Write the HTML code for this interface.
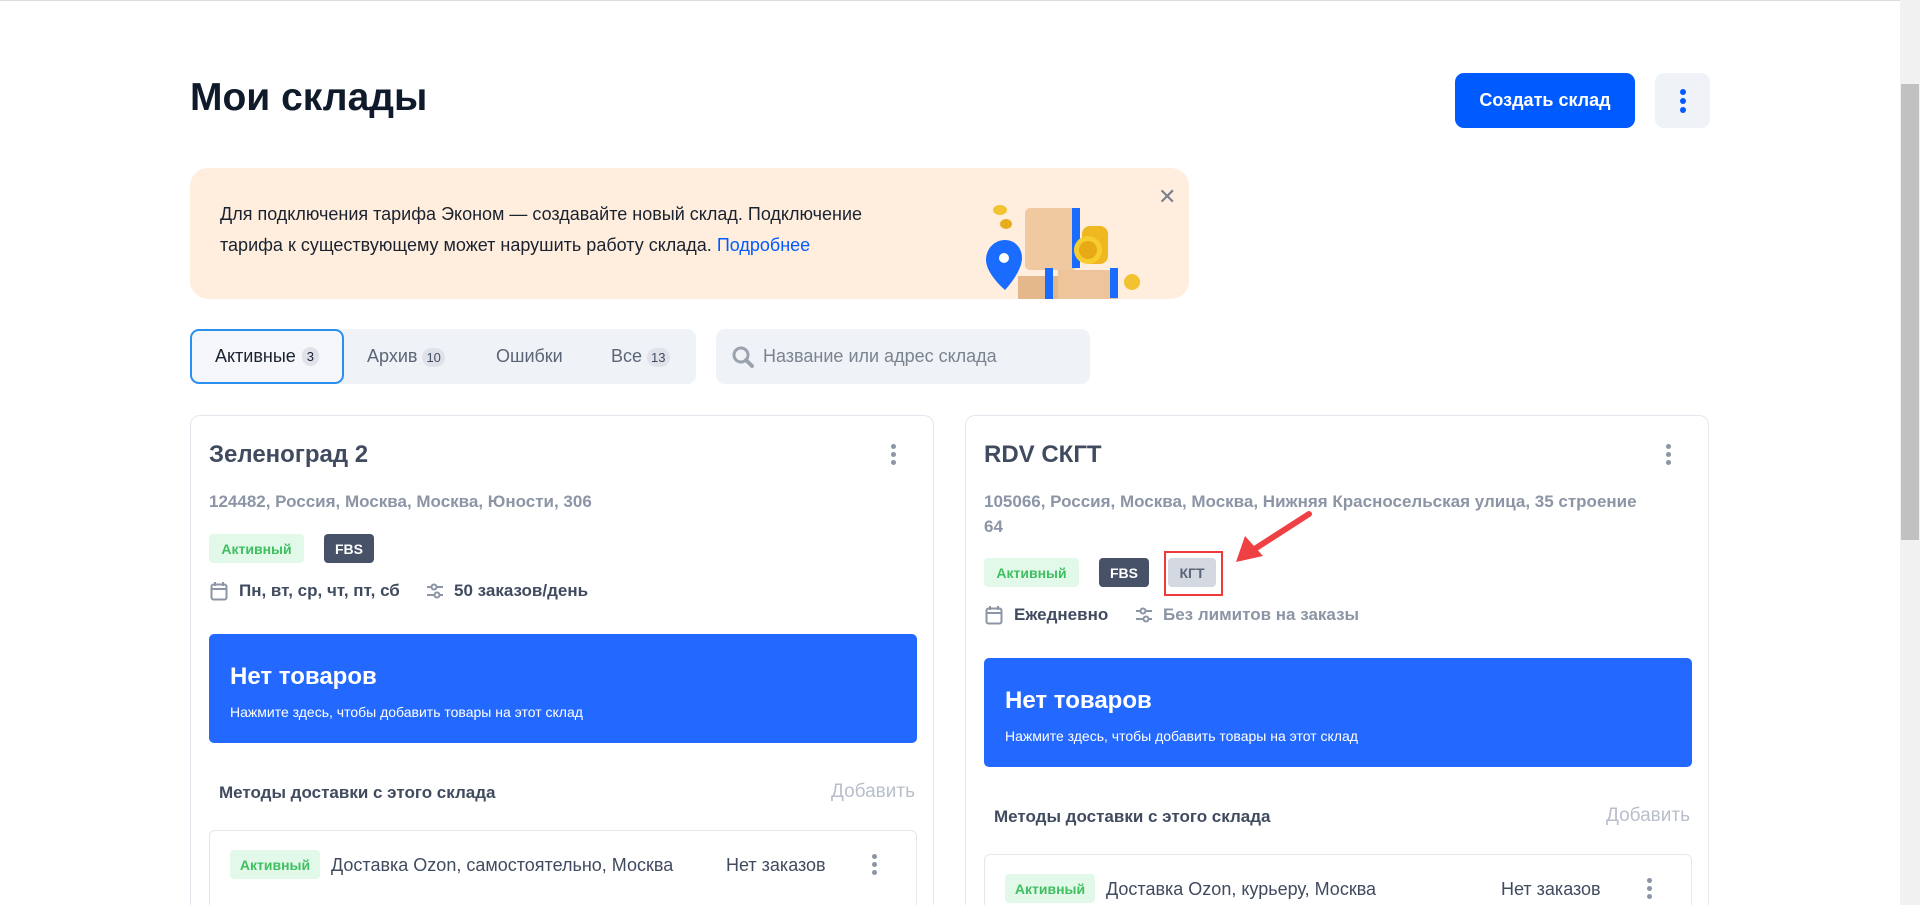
<!DOCTYPE html>
<html><head><meta charset="utf-8"><style>
*{box-sizing:border-box;margin:0;padding:0}
html{width:1920px;height:905px;overflow:hidden}
body{width:1920px;height:905px;overflow:hidden;background:#fff;font-family:"Liberation Sans",sans-serif;position:relative;color:#404b5f}
.a{position:absolute;white-space:nowrap}
.c{display:flex;align-items:center;justify-content:center}
.card{position:absolute;top:415px;width:744px;height:490px;border:1px solid #e3e7ee;border-bottom:none;border-radius:10px 10px 0 0;overflow:hidden}
.wrap{position:absolute;left:0;top:0;width:1920px;height:905px;overflow:hidden}
.t{font-size:24px;font-weight:bold;color:#404b5f}
.addr{font-size:17px;color:#8c95a5;font-weight:bold;line-height:25px}
.badge{position:absolute;height:29px;border-radius:4px;font-size:14px;font-weight:bold;display:flex;align-items:center;justify-content:center}
.act{background:#e2f9e9;color:#3fbf61}
.fbs{background:#475268;color:#fff}
.kgt{background:#d4d9e1;color:#5c6577}
.sch{font-size:17px;font-weight:bold}
.blue{position:absolute;left:18px;width:708px;height:109px;background:#2469ff;border-radius:5px;color:#fff}
.blue b{position:absolute;left:21px;top:29px;font-size:24px}
.blue span{position:absolute;left:21px;top:70px;font-size:14px}
.meth{font-size:17px;font-weight:bold}
.add{font-size:19px;color:#b8bfca}
.dl{position:absolute;left:18px;width:708px;height:120px;border:1px solid #e3e7ee;border-radius:6px}
.dots{position:absolute;width:6px}
.dots i{display:block;width:5px;height:5px;border-radius:50%;background:#8c95a5;margin-bottom:3px}
</style></head><body><div class="wrap">
<div class="a" style="left:0;top:0;width:1900px;height:1px;background:#ddd"></div>
<div class="a" style="left:1900px;top:0;width:20px;height:905px;background:#f1f1f1"></div>
<div class="a" style="left:1901px;top:84px;width:18px;height:456px;background:#c1c1c1"></div>

<div class="a" style="left:190px;top:76px;font-size:39px;font-weight:bold;color:#0f1a2a">Мои склады</div>
<div class="a c" style="left:1455px;top:73px;width:180px;height:55px;background:#005bff;border-radius:9px;color:#fff;font-size:18px;font-weight:bold">Создать склад</div>
<div class="a c" style="left:1655px;top:73px;width:55px;height:55px;background:#eff3f8;border-radius:9px;flex-direction:column;gap:3px">
<i style="width:6px;height:6px;border-radius:50%;background:#005bff"></i><i style="width:6px;height:6px;border-radius:50%;background:#005bff"></i><i style="width:6px;height:6px;border-radius:50%;background:#005bff"></i></div>

<div class="a" style="left:190px;top:168px;width:999px;height:131px;background:#ffeedd;border-radius:18px;overflow:hidden">
<div class="a" style="left:30px;top:31px;font-size:18px;line-height:31px;color:#1a2230;white-space:normal;width:700px">Для подключения тарифа Эконом — создавайте новый склад. Подключение<br>тарифа к существующему может нарушить работу склада. <span style="color:#005bff">Подробнее</span></div>
<div class="a" style="left:968px;top:16px;font-size:22px;color:#7a818c">✕</div>
<svg class="a" style="left:770px;top:30px" width="200" height="101" viewBox="0 0 200 101">
<ellipse cx="40" cy="12" rx="7" ry="5" fill="#f2c230"/><ellipse cx="46" cy="26" rx="6" ry="5" fill="#e6ad1c"/>
<path d="M26 62c0-12 9-20 19-20s17 8 17 18c0 14-17 32-17 32S26 76 26 62z" fill="#1a6cff"/><circle cx="44" cy="60" r="5" fill="#fff"/>
<rect x="58" y="78" width="50" height="30" fill="#e5b88c"/><rect x="98" y="72" width="60" height="35" fill="#eec49a"/>
<rect x="65" y="10" width="52" height="62" rx="5" fill="#f0c9a0"/><rect x="112" y="10" width="8" height="60" fill="#1a6cff"/>
<rect x="85" y="70" width="8" height="35" fill="#1a6cff"/><rect x="150" y="70" width="8" height="30" fill="#1a6cff"/>
<rect x="122" y="28" width="26" height="38" rx="8" fill="#f0b820"/><circle cx="128" cy="52" r="14" fill="#f7cc2e"/><circle cx="128" cy="52" r="9" fill="#e7a915"/>
<circle cx="172" cy="84" r="8" fill="#f2c230"/>
</svg></div>

<div class="a" style="left:190px;top:329px;width:506px;height:55px;background:#eff2f7;border-radius:9px"></div>
<div class="a c" style="left:190px;top:329px;width:154px;height:55px;background:#f5f7fa;border:2px solid #2a8ff0;border-radius:9px;font-size:18px;color:#1a2230">Активные <span style="margin-left:6px;background:#dfe3e9;border-radius:10px;font-size:13px;padding:2px 5px">3</span></div>
<div class="a" style="left:367px;top:346px;font-size:18px;color:#5c6577">Архив <span style="background:#dfe3e9;border-radius:10px;font-size:13px;padding:2px 4px;color:#404b5f">10</span></div>
<div class="a" style="left:496px;top:346px;font-size:18px;color:#5c6577">Ошибки</div>
<div class="a" style="left:611px;top:346px;font-size:18px;color:#5c6577">Все <span style="background:#dfe3e9;border-radius:10px;font-size:13px;padding:2px 4px;color:#404b5f">13</span></div>
<div class="a" style="left:716px;top:329px;width:374px;height:55px;background:#eff2f7;border-radius:9px"></div>
<svg class="a" style="left:730px;top:344px" width="26" height="26" viewBox="0 0 26 26"><circle cx="11" cy="11" r="7" fill="none" stroke="#9aa2ae" stroke-width="3"/><path d="M16 16l6 6" stroke="#9aa2ae" stroke-width="4" stroke-linecap="round"/></svg>
<div class="a" style="left:763px;top:346px;font-size:18px;color:#7a838f">Название или адрес склада</div>

<!-- card 1 -->
<div class="card" style="left:190px">
<div class="a t" style="left:18px;top:25px">Зеленоград 2</div>
<div class="dots" style="left:700px;top:28px"><i></i><i></i><i></i></div>
<div class="a addr" style="left:18px;top:73px">124482, Россия, Москва, Москва, Юности, 306</div>
<div class="badge act" style="left:18px;top:118px;width:95px">Активный</div>
<div class="badge fbs" style="left:133px;top:118px;width:50px">FBS</div>
<svg class="a" style="left:19px;top:165px" width="18" height="20" viewBox="0 0 18 20"><rect x="1.5" y="3.5" width="15" height="15" rx="2" fill="none" stroke="#8c95a5" stroke-width="2"/><path d="M1.5 8h15M5 1v4M13 1v4" stroke="#8c95a5" stroke-width="2"/></svg>
<div class="a sch" style="left:48px;top:165px">Пн, вт, ср, чт, пт, сб</div>
<svg class="a" style="left:234px;top:165px" width="20" height="20" viewBox="0 0 20 20"><path d="M2 6h5M11 6h7M2 14h8M14 14h4" stroke="#8c95a5" stroke-width="2"/><circle cx="9" cy="6" r="2.5" fill="none" stroke="#8c95a5" stroke-width="2"/><circle cx="12" cy="14" r="2.5" fill="none" stroke="#8c95a5" stroke-width="2"/></svg>
<div class="a sch" style="left:263px;top:165px">50 заказов/день</div>
<div class="blue" style="top:218px"><b>Нет товаров</b><span>Нажмите здесь, чтобы добавить товары на этот склад</span></div>
<div class="a meth" style="left:28px;top:367px">Методы доставки с этого склада</div>
<div class="a add" style="right:18px;top:365px">Добавить</div>
<div class="dl" style="top:414px">
<div class="badge act" style="left:20px;top:19px;width:90px">Активный</div>
<div class="a" style="left:121px;top:24px;font-size:18px">Доставка Ozon, самостоятельно, Москва</div>
<div class="a" style="left:516px;top:24px;font-size:18px">Нет заказов</div>
<div class="dots" style="left:662px;top:23px"><i></i><i></i><i></i></div>
</div></div>

<!-- card 2 -->
<div class="card" style="left:965px">
<div class="a t" style="left:18px;top:25px">RDV СКГТ</div>
<div class="dots" style="left:700px;top:28px"><i></i><i></i><i></i></div>
<div class="a addr" style="left:18px;top:73px">105066, Россия, Москва, Москва, Нижняя Красносельская улица, 35 строение<br>64</div>
<div class="badge act" style="left:18px;top:142px;width:95px">Активный</div>
<div class="badge fbs" style="left:133px;top:142px;width:50px">FBS</div>
<div class="badge kgt" style="left:202px;top:142px;width:48px">КГТ</div>
<div class="a" style="left:198px;top:135px;width:59px;height:45px;border:2px solid #ee3a3a"></div>
<svg class="a" style="left:265px;top:90px" width="90" height="60" viewBox="0 0 90 60"><path d="M78 8L22 44" stroke="#ef4044" stroke-width="6" stroke-linecap="round"/><path d="M5 56L14 30L32 50Z" fill="#ef4044"/></svg>
<svg class="a" style="left:19px;top:189px" width="18" height="20" viewBox="0 0 18 20"><rect x="1.5" y="3.5" width="15" height="15" rx="2" fill="none" stroke="#8c95a5" stroke-width="2"/><path d="M1.5 8h15M5 1v4M13 1v4" stroke="#8c95a5" stroke-width="2"/></svg>
<div class="a sch" style="left:48px;top:189px">Ежедневно</div>
<svg class="a" style="left:168px;top:189px" width="20" height="20" viewBox="0 0 20 20"><path d="M2 6h5M11 6h7M2 14h8M14 14h4" stroke="#8c95a5" stroke-width="2"/><circle cx="9" cy="6" r="2.5" fill="none" stroke="#8c95a5" stroke-width="2"/><circle cx="12" cy="14" r="2.5" fill="none" stroke="#8c95a5" stroke-width="2"/></svg>
<div class="a sch" style="left:197px;top:189px;color:#8c95a5">Без лимитов на заказы</div>
<div class="blue" style="top:242px"><b>Нет товаров</b><span>Нажмите здесь, чтобы добавить товары на этот склад</span></div>
<div class="a meth" style="left:28px;top:391px">Методы доставки с этого склада</div>
<div class="a add" style="right:18px;top:389px">Добавить</div>
<div class="dl" style="top:438px">
<div class="badge act" style="left:20px;top:19px;width:90px">Активный</div>
<div class="a" style="left:121px;top:24px;font-size:18px">Доставка Ozon, курьеру, Москва</div>
<div class="a" style="left:516px;top:24px;font-size:18px">Нет заказов</div>
<div class="dots" style="left:662px;top:23px"><i></i><i></i><i></i></div>
</div></div>
</div></body></html>
